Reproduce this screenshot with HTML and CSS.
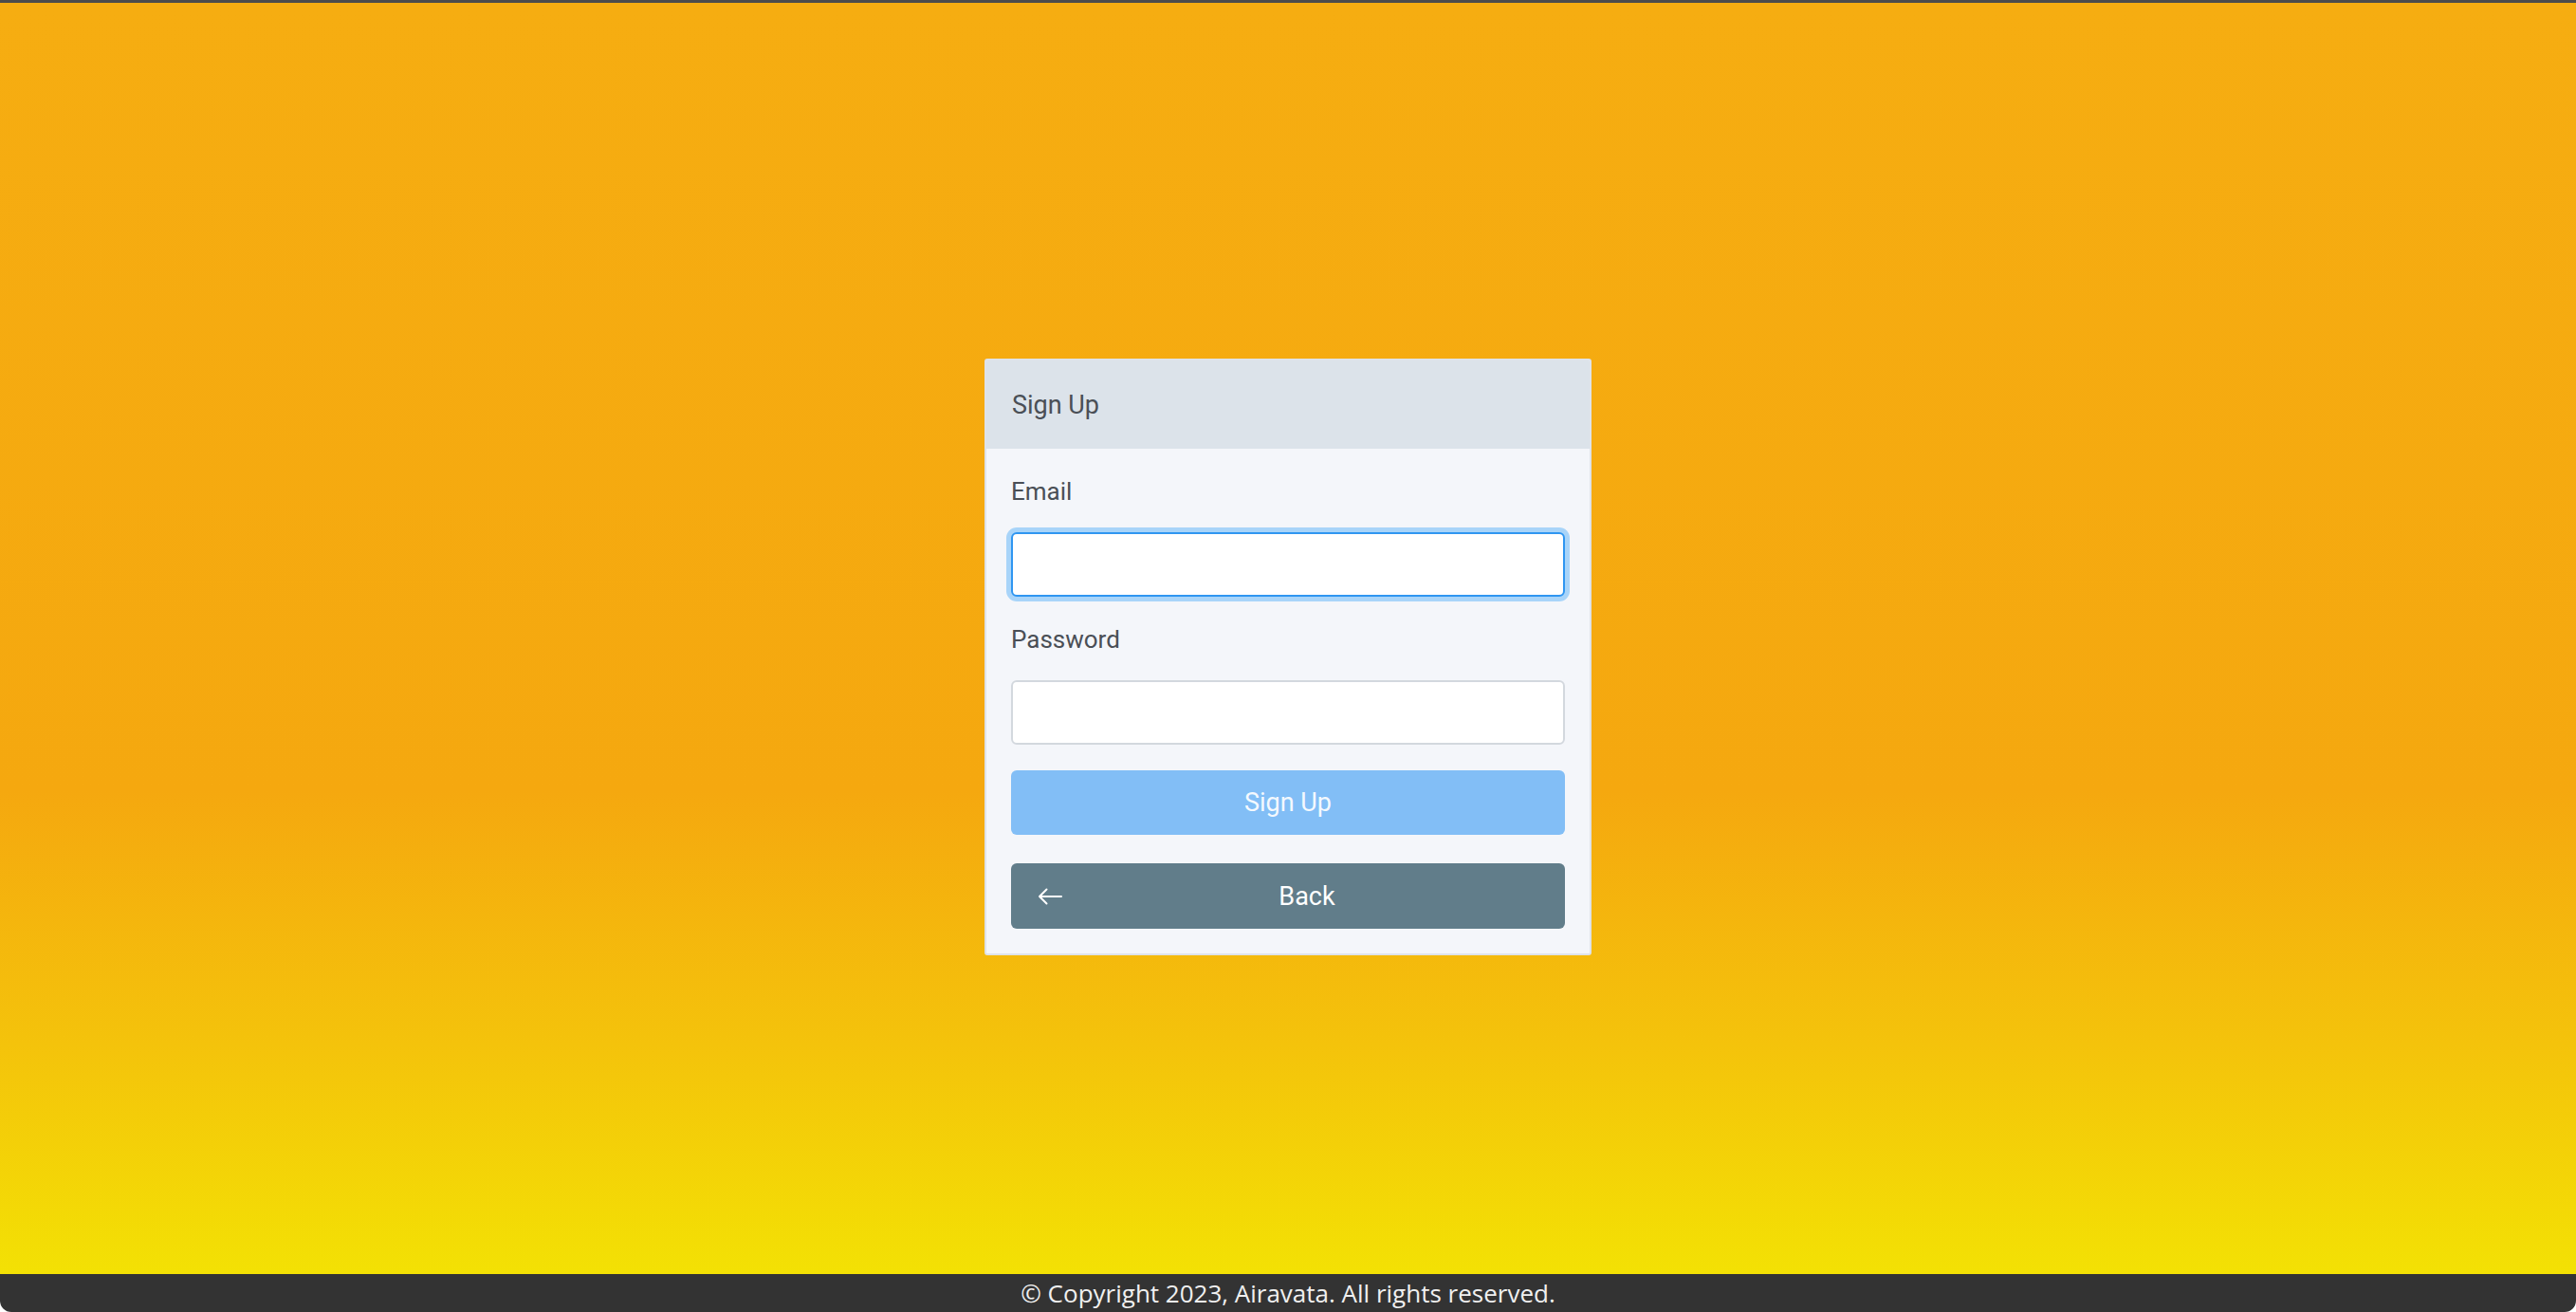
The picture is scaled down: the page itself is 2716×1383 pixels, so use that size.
FILE: index.html
```html
<!DOCTYPE html>
<html lang="en">
<head>
<meta charset="utf-8">
<title>Sign Up</title>
<link rel="stylesheet" href="styles.css">
</head>
<body>
<div class="window">
  <div class="topline"></div>
  <main class="main">
    <section class="card">
      <header class="card-header">Sign Up</header>
      <form class="card-body">
        <label class="label" for="email">Email</label>
        <input class="input input-focus" id="email" type="email">
        <label class="label label-next" for="password">Password</label>
        <input class="input" id="password" type="password">
        <button type="button" class="btn btn-primary">Sign Up</button>
        <button type="button" class="btn btn-back">
          <svg class="back-icon" viewBox="0 0 26 18" width="26" height="18" aria-hidden="true"><path d="M25 9H2M9.5 1.5L2 9l7.5 7.5" fill="none" stroke="#ffffff" stroke-width="2" stroke-linecap="round" stroke-linejoin="round"/></svg>
          <span class="btn-text">Back</span>
        </button>
      </form>
    </section>
  </main>
  <footer class="footer">© Copyright 2023, Airavata. All rights reserved.</footer>
</div>
</body>
</html>
```
FILE: styles.css
```css
html, body {
  margin: 0;
  padding: 0;
  background: #ffffff;
}
body {
  font-family: Roboto, "Liberation Sans", sans-serif;
}
.window {
  width: 2716px;
  height: 1383px;
  display: flex;
  flex-direction: column;
  overflow: hidden;
}
.topline {
  height: 3px;
  background: #4c4c4c;
  flex: none;
}
.main {
  flex: 1;
  background: linear-gradient(to bottom, #f6ad11 0%, #f5a80f 62%, #f4c30b 82%, #f3e104 100%);
  display: flex;
  justify-content: center;
  align-items: flex-start;
  padding-top: 375px;
  box-sizing: border-box;
}
.card {
  width: 640px;
  box-sizing: border-box;
  border: 2px solid #dfe3e9;
  border-radius: 3px;
  background: #f4f6fa;
  overflow: hidden;
}
.card-header {
  height: 93px;
  background: #dce3ea;
  color: #4a4f56;
  font-size: 27px;
  display: flex;
  align-items: center;
  padding: 0 27px;
}
.card-body {
  display: flex;
  flex-direction: column;
  padding: 27px 26px 26px;
  margin: 0;
}
.label {
  color: #4a4f56;
  font-size: 26px;
  line-height: 36px;
  margin-bottom: 25px;
}
.label-next {
  margin-top: 27px;
  margin-bottom: 25px;
}
.input {
  height: 68px;
  box-sizing: border-box;
  border: 2px solid #d3d8de;
  border-radius: 6px;
  background: #ffffff;
  outline: none;
  margin: 0;
  padding: 0 14px;
  font-size: 26px;
}
.input-focus {
  border-color: #2f96f1;
  box-shadow: 0 0 0 5px #a8d4f9;
}
.btn {
  height: 68px;
  border: none;
  border-radius: 6px;
  font-family: Roboto, "Liberation Sans", sans-serif;
  font-size: 27px;
  color: #ffffff;
  margin: 0;
  padding: 0;
}
.btn-primary {
  margin-top: 27px;
  background: #82bef6;
  color: #f4f9fe;
}
.btn-back {
  height: 69px;
  margin-top: 30px;
  background: #617d8a;
  display: flex;
  align-items: center;
  padding: 0 14px 0 28px;
}
.back-icon {
  flex: none;
}
.btn-text {
  flex: 1;
  text-align: center;
}
.footer {
  height: 40px;
  flex: none;
  background: #333333;
  color: #f0f0f0;
  font-family: "Open Sans", sans-serif;
  font-size: 26px;
  line-height: 40px;
  text-align: center;
  border-radius: 0 0 12px 12px;
}
```
